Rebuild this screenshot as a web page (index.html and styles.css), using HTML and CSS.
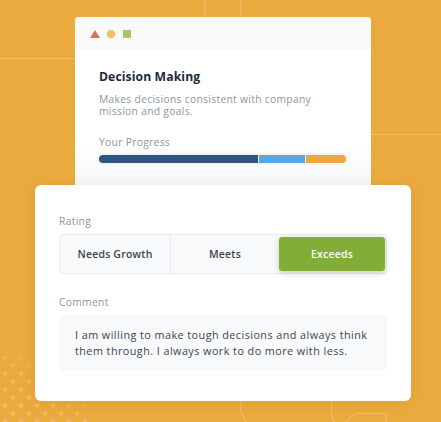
FILE: index.html
```html
<!DOCTYPE html>
<html>
<head>
<meta charset="utf-8">
<link rel="stylesheet" href="styles.css">
</head>
<body>
<div class="stage">
  <svg class="deco" width="441" height="422" viewBox="0 0 441 422" xmlns="http://www.w3.org/2000/svg">
    <defs>
      <pattern id="dots" x="0" y="2" width="16" height="16" patternUnits="userSpaceOnUse">
        <path d="M5 0.5 L8 3.5 L5 6.5 L2 3.5 Z" fill="#fff"/>
        <path d="M13 8.5 L16 11.5 L13 14.5 L10 11.5 Z" fill="#fff"/>
      </pattern>
      <linearGradient id="fade" x1="0" y1="1" x2="1" y2="0">
        <stop offset="0" stop-color="#fff" stop-opacity="1"/>
        <stop offset="0.45" stop-color="#fff" stop-opacity="0.9"/>
        <stop offset="0.75" stop-color="#fff" stop-opacity="0"/>
      </linearGradient>
      <mask id="m">
        <rect x="0" y="355" width="90" height="67" fill="url(#fade)"/>
      </mask>
    </defs>
    <g stroke="#fff" stroke-opacity="0.22" stroke-width="1.2" fill="none">
      <line x1="205" y1="0" x2="205" y2="20"/>
      <line x1="241" y1="0" x2="241" y2="20"/>
      <line x1="0" y1="58.5" x2="78" y2="58.5"/>
      <line x1="368" y1="134.5" x2="441" y2="134.5"/>
      <path d="M241 398 C239 406 241 416 248 424"/>
      <path d="M331.5 398 L331.5 412 C331.5 418 334 421 337 424"/>
      <path d="M343 424 L356 413.5 L386 413.5 L386 424"/>
    </g>
    <rect x="0" y="355" width="90" height="67" fill="url(#dots)" opacity="0.18" mask="url(#m)"/>
  </svg>

  <div class="content">
    <div class="card-top">
      <div class="window-bar">
        <svg width="42" height="10" viewBox="0 0 42 10" xmlns="http://www.w3.org/2000/svg">
          <path d="M5 1 L10 9 L0 9 Z" fill="#d5725d"/>
          <circle cx="21" cy="5" r="4.2" fill="#f2c06c"/>
          <rect x="33" y="1" width="8" height="8" fill="#a9c56c"/>
        </svg>
      </div>
      <div class="top-body">
        <h2 class="title">Decision Making</h2>
        <p class="desc">Makes decisions consistent with company mission and goals.</p>
        <div class="label progress-label">Your Progress</div>
        <div class="track">
          <div class="bar">
            <span class="seg seg-dark" style="width:159px"></span>
            <span class="seg seg-light" style="width:46px"></span>
            <span class="seg seg-orange" style="width:40px"></span>
          </div>
        </div>
      </div>
    </div>

    <div class="card-bottom">
      <div class="label">Rating</div>
      <div class="segmented">
        <div class="option">Needs Growth</div>
        <div class="option">Meets</div>
        <div class="option active">Exceeds</div>
      </div>
      <div class="label comment-label">Comment</div>
      <div class="comment">I am willing to make tough decisions and always think them through. I always work to do more with less.</div>
    </div>
  </div>
</div>
</body>
</html>
```

FILE: styles.css
```css
* { box-sizing: border-box; }
html, body {
  margin: 0;
  padding: 0;
}
body {
  background: #ebaa3e;
  font-family: "Open Sans", "Noto Sans", sans-serif;
  overflow: hidden;
}
.stage {
  position: relative;
  width: 441px;
  height: 422px;
  overflow: hidden;
}
.deco {
  position: absolute;
  left: 0;
  top: 0;
}
.content {
  position: relative;
  padding-top: 17px;
  display: flex;
  flex-direction: column;
}
.card-top {
  margin-left: 75px;
  width: 296px;
  height: 168px;
  border-radius: 4px 4px 0 0;
  background: linear-gradient(#fff 0, #fff 120px, #f6f8f9 168px);
  overflow: hidden;
}
.window-bar {
  height: 32px;
  background: #f9f9f9;
  padding: 12px 0 0 15px;
  display: flex;
}
.window-bar svg { display: block; }
.top-body {
  padding: 20px 0 0 24px;
}
.title {
  margin: 0;
  font-size: 12.2px;
  font-weight: 700;
  color: #1e2b3a;
  line-height: 16px;
  letter-spacing: 0.1px;
}
.desc {
  margin: 8px 0 0;
  width: 235px;
  font-size: 10.3px;
  line-height: 12px;
  color: #8b95a1;
  letter-spacing: 0.3px;
}
.label {
  font-size: 10.3px;
  line-height: 13px;
  color: #8b95a1;
  letter-spacing: 0.3px;
}
.progress-label {
  margin-top: 19px;
}
.track {
  margin: 4px 0 0 -2px;
  width: 252px;
  height: 12px;
  padding: 2px;
  background: #f2f3f5;
  border-radius: 6px;
}
.bar {
  display: flex;
  gap: 1px;
  height: 8px;
  border-radius: 4px;
  overflow: hidden;
  width: 247px;
}
.seg { display: block; height: 8px; }
.seg-dark { background: #2c5781; }
.seg-light { background: #59a5df; }
.seg-orange { background: #eba83e; }

.card-bottom {
  margin-left: 35px;
  width: 376px;
  height: 216px;
  background: #fff;
  border-radius: 6px;
  box-shadow: 0 2px 14px rgba(120, 70, 0, 0.12);
  padding: 30px 24px 0 24px;
}
.segmented {
  margin-top: 6px;
  width: 328px;
  height: 40px;
  display: grid;
  grid-template-columns: 110px 109px 1fr;
  background: #f8f9fa;
  border: 1px solid #e9ecef;
  border-radius: 4px;
}
.option {
  display: flex;
  align-items: center;
  justify-content: center;
  font-size: 10.5px;
  font-weight: 600;
  color: #3b4450;
  letter-spacing: 0.2px;
}
.option + .option {
  border-left: 1px solid #e9ecef;
}
.option.active {
  margin: 2px 1px 2px 0;
  border-left: none;
  background: #82ae37;
  color: #fff;
  border-radius: 3px;
  box-shadow: 0 2px 6px rgba(60, 90, 20, 0.25);
}
.comment-label {
  margin-top: 22px;
}
.comment {
  margin-top: 6px;
  width: 328px;
  height: 56px;
  background: #f8f9fa;
  border-radius: 4px;
  padding: 12px 16px 0 16px;
  font-size: 10.8px;
  line-height: 16px;
  color: #3b4450;
  letter-spacing: 0.45px;
}
```
